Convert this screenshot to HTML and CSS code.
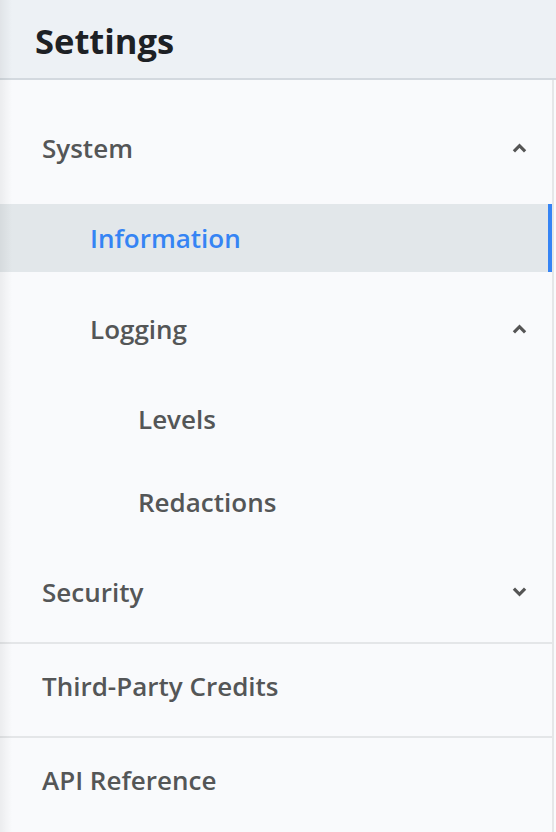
FILE: index.html
```html
<!DOCTYPE html>
<html lang="en">
<head>
<meta charset="utf-8">
<title>Settings</title>
<link rel="stylesheet" href="styles.css">
</head>
<body>
<aside class="sidebar">
  <header class="sidebar-header">
    <h1 class="title">Settings</h1>
  </header>
  <nav class="nav">
    <div class="section section-main">
      <div class="item level-1">
        <span class="label">System</span>
        <svg class="chev" width="15" height="10" viewBox="0 0 15 10"><path d="M1.9 8.3 L7.5 2.7 L13.1 8.3" fill="none" stroke="#555" stroke-width="3.2"/></svg>
      </div>
      <a class="item level-2 active gap-22"><span class="label">Information</span></a>
      <div class="item level-2 gap-23">
        <span class="label">Logging</span>
        <svg class="chev" width="15" height="10" viewBox="0 0 15 10"><path d="M1.9 8.3 L7.5 2.7 L13.1 8.3" fill="none" stroke="#555" stroke-width="3.2"/></svg>
      </div>
      <a class="item level-3 gap-22"><span class="label">Levels</span></a>
      <a class="item level-3 gap-15"><span class="label">Redactions</span></a>
      <div class="item level-1 gap-22">
        <span class="label">Security</span>
        <svg class="chev" width="15" height="10" viewBox="0 0 15 10"><path d="M1.9 1.7 L7.5 7.3 L13.1 1.7" fill="none" stroke="#555" stroke-width="3.2"/></svg>
      </div>
    </div>
    <div class="section">
      <a class="item level-1"><span class="label">Third-Party Credits</span></a>
    </div>
    <div class="section">
      <a class="item level-1"><span class="label">API Reference</span></a>
    </div>
  </nav>
</aside>
</body>
</html>
```

FILE: styles.css
```css
html, body {
  margin: 0;
  padding: 0;
}
body {
  background: #f9fafc;
  font-family: "Open Sans", "Noto Sans", sans-serif;
  width: 556px;
  height: 832px;
  overflow: hidden;
}
.sidebar {
  position: relative;
  display: flex;
  flex-direction: column;
  height: 832px;
}
.sidebar::before {
  content: "";
  position: absolute;
  left: 0;
  top: 0;
  bottom: 0;
  width: 12px;
  background: linear-gradient(to right, rgba(0,0,0,0.055), rgba(0,0,0,0));
  pointer-events: none;
  z-index: 2;
}
.sidebar-header {
  height: 78px;
  box-sizing: border-box;
  padding: 3px 0 0 35px;
  background: #edf1f5;
  border-bottom: 2px solid #d3d9df;
  display: flex;
  align-items: center;
  height: 80px;
}
.title {
  margin: 0;
  font-size: 34.5px;
  font-weight: 700;
  color: #1d2125;
  line-height: 40px;
}
.nav {
  flex: 1;
  width: 552px;
  border-right: 2px solid #e5e6e8;
  display: flex;
  flex-direction: column;
}
.section {
  display: flex;
  flex-direction: column;
  padding: 8px 0 16px;
}
.section + .section {
  border-top: 2px solid #e4e6e8;
}
.section-main {
  padding-top: 34px;
}
.item {
  height: 68px;
  display: flex;
  align-items: center;
  justify-content: space-between;
  padding-right: 25px;
  font-size: 26px;
  font-weight: 600;
  color: #545657;
  text-decoration: none;
  box-sizing: border-box;
}
.label {
  line-height: 36px;
}
.level-1 { padding-left: 42px; }
.level-2 { padding-left: 90px; }
.level-3 { padding-left: 138px; }
.gap-15 { margin-top: 15px; }
.gap-22 { margin-top: 22px; }
.gap-23 { margin-top: 23px; }
.active {
  background: #e2e7ea;
  color: #3584f4;
  border-right: 4px solid #3584f4;
}
.chev {
  display: block;
  flex: none;
}
```
